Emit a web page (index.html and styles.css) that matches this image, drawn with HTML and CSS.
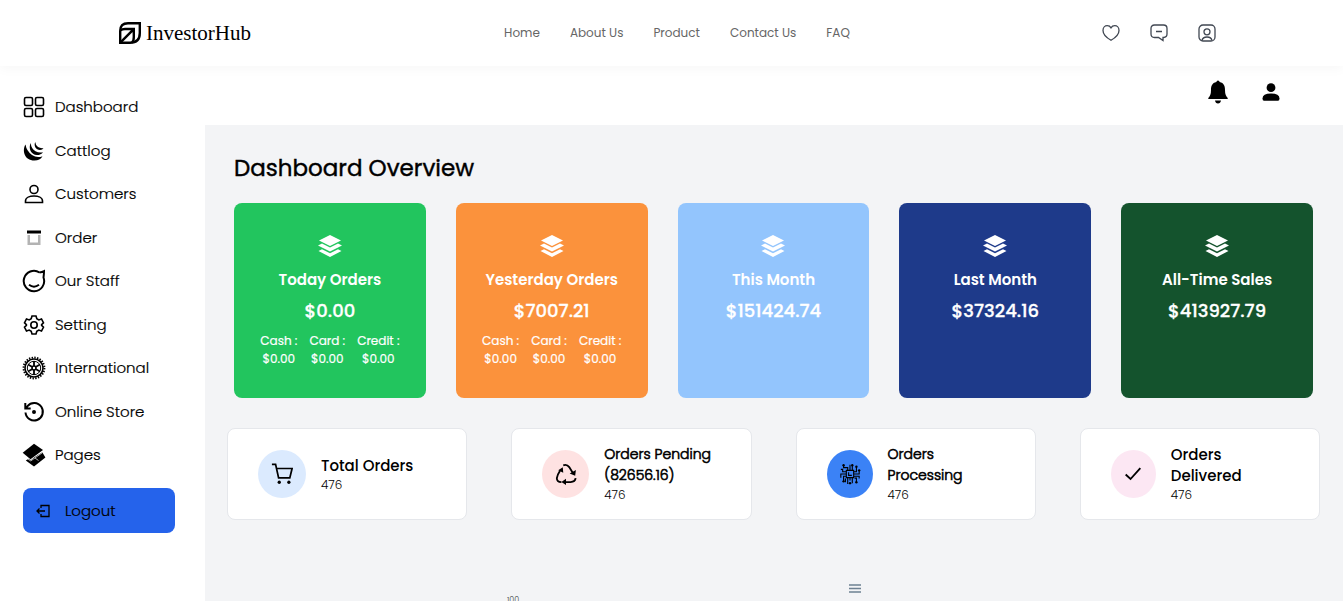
FILE: index.html
```html
<!DOCTYPE html>
<html lang="en">
<head>
<meta charset="utf-8">
<meta name="viewport" content="width=device-width, initial-scale=1">
<title>InvestorHub</title>
<link rel="stylesheet" href="styles.css">
</head>
<body>
<svg class="defs" aria-hidden="true">
  <symbol id="layers" viewBox="0 0 24 24"><path d="M12 1L23 6.500 12 12 1 6.500z"/><path d="M4 9.500L12 13.500 20 9.500 24 11.500 12 17.500 0 11.500z"/><path d="M4 15.300L12 19.200 20 15.300 23.500 17 12 23 .5 17z"/></symbol>
</svg>

<header class="site-header">
  <a class="brand" href="#">
    <svg width="22" height="22" viewBox="0 0 22 22" fill="none" stroke="#000" stroke-width="2.400"><path d="M1.200 20.800V9Q1.200 1.200 9 1.200H20.800V11Q20.800 20.800 11 20.800z"/><path d="M1.500 8.500Q3 7 6 7H14.800V15Q14.800 19 13 20.500M1.800 20.200L14.500 7.300"/></svg>
    <span>InvestorHub</span>
  </a>
  <nav class="site-nav">
    <a href="#">Home</a><a href="#">About Us</a><a href="#">Product</a><a href="#">Contact Us</a><a href="#">FAQ</a>
  </nav>
  <div class="site-actions">
    <button type="button" aria-label="Wishlist"><svg width="18" height="18" viewBox="0 0 18 18"><path d="M9 16.300C5 14 1 10.500 1 6.500C1 3.500 3 1.700 5.200 1.700C7 1.700 8.300 2.600 9 3.800C9.700 2.600 11 1.700 12.800 1.700C15 1.700 17 3.500 17 6.500C17 10.500 13 14 9 16.300z"/></svg></button>
    <button type="button" aria-label="Messages"><svg width="18" height="18" viewBox="0 0 18 18"><path d="M4.500 1H13.500Q17 1 17 4.500V10Q17 13.300 13.500 13.500H13V16.500L8.500 13.500H4.500Q1 13.500 1 10V4.500Q1 1 4.500 1zM6 7.500H12"/></svg></button>
    <button type="button" aria-label="Profile"><svg width="18" height="18" viewBox="0 0 18 18"><rect x="1" y="1" width="16" height="16" rx="4"/><circle cx="9" cy="7.800" r="3"/><path d="M4 16.500C4.500 14 6.500 13 9 13S13.500 14 14 16.500"/></svg></button>
  </div>
</header>

<div class="layout">
  <aside class="sidebar">
    <ul class="menu">
      <li><a href="#"><svg viewBox="0 0 24 24" class="line"><rect x="2.500" y="2.500" width="8" height="8" rx="1.500"/><rect x="13.500" y="2.500" width="8" height="8" rx="1.500"/><rect x="2.500" y="13.500" width="8" height="8" rx="1.500"/><rect x="13.500" y="13.500" width="8" height="8" rx="1.500"/></svg>Dashboard</a></li>
      <li><a href="#"><svg viewBox="0 0 24 24"><path d="M3.500 5.500C0 11 2 21.500 12.500 21.500Q18 21.500 20.500 17.200Q15 19.500 10 16Q4.500 12 3.500 5.500zM8.800 4C6 9 9 16 15 16Q19 16 21 13.200Q17 14.200 13.500 12.200Q9 9.500 8.800 4zM13.200 3C11.500 7 14 11 18 11Q20.500 11 21.500 9Q18.500 9.500 16 8Q13.500 6 13.200 3z"/></svg>Cattlog</a></li>
      <li><a href="#"><svg viewBox="0 0 24 24" class="line"><circle cx="12" cy="7.500" r="4"/><path d="M3.500 20.500V19C3.500 15.500 8 14 12 14S20.500 15.500 20.500 19V20.500z"/></svg>Customers</a></li>
      <li><a href="#"><svg viewBox="0 0 24 24"><path d="M5 4.500H19V7.500H5z"/><path fill="#b3b3b3" d="M5.500 9H8V16.500H16V9H18.500V19H5.500z"/></svg>Order</a></li>
      <li><a href="#"><svg viewBox="0 0 24 24" class="line bold"><path d="M17.500 3.500A10.200 10.200 0 1 0 21.500 8.500Q22 5 22 2.200Q20 3.200 17.500 3.500M7 15.800Q12 19.500 17 15.800"/></svg>Our Staff</a></li>
      <li><a href="#"><svg viewBox="0 0 24 24" class="line"><circle cx="12" cy="12" r="3.200"/><path d="M10 3H14L14.800 5.700L16.800 6.900L19.500 6L21.500 9.800L19.600 11.700V12.300L21.500 14.200L19.500 18L16.800 17.100L14.800 18.300L14 21H10L9.200 18.300L7.200 17.100L4.500 18L2.500 14.200L4.400 12.300V11.700L2.500 9.800L4.500 6L7.200 6.900L9.200 5.700z"/></svg>Setting</a></li>
      <li><a href="#"><svg viewBox="0 0 24 24" class="line"><circle cx="12" cy="12" r="10.400" stroke-width="2" stroke-dasharray="1.430 1.292"/><circle cx="12" cy="12" r="9"/><circle cx="12" cy="12" r="6.700" stroke-width="1"/><circle cx="12" cy="12" r="2"/><path stroke-width="1.800" d="M12 5V10M12 14V19M6 8.500L10 10.700M14 13.300L18 15.500M6 15.500L10 13.300M14 10.700L18 8.500"/></svg>International</a></li>
      <li><a href="#"><svg viewBox="0 0 24 24" class="line bold"><path d="M3.500 12.500A8.700 8.700 0 1 0 5.500 6.200L3.500 8.200M3.300 3V8.500H8.700"/><circle cx="12" cy="12" r="1" fill="#000"/></svg>Online Store</a></li>
      <li><a href="#"><svg viewBox="0 0 24 24"><path d="M12 .8L21 7 8.500 16.300 .7 9.700z"/><path d="M12.500 14.200L20.300 9.300 23.400 14.500 12 23.400 3.800 17.500 6.500 15.800 9 17.300z"/><path d="M5.500 16L8.800 17.900 20.500 9.600M13 15L16.500 17.500" fill="none" stroke="#fff" stroke-width=".7"/></svg>Pages</a></li>
    </ul>
    <button type="button" class="logout"><svg width="14" height="14" viewBox="0 0 14 14"><path d="M5 4V1.500H13V12.500H5V10M1 7H9M3.500 4.500L1 7L3.500 9.500"/></svg>Logout</button>
  </aside>

  <div class="workspace">
    <div class="topbar">
      <button type="button" aria-label="Notifications"><svg width="20" height="24" viewBox="0 0 20 24"><path d="M10 .5Q11.500 .5 11.600 2C16 3 17 6 17 10Q17 15.500 19.700 18V19H.3V18Q3 15.500 3 10C3 6 4 3 8.400 2Q8.500 .5 10 .5zM7 20.500H13Q12.500 23.500 10 23.500T7 20.500z"/></svg></button>
      <button type="button" aria-label="Account"><svg width="20" height="24" viewBox="0 0 20 24"><circle cx="10" cy="7.700" r="4.400"/><path d="M1.500 18.500Q1.500 13.500 10 13.500T18.500 18.500Q18.500 20.700 17 20.700H3Q1.500 20.700 1.500 18.500z"/></svg></button>
    </div>

    <main class="content">
      <h1>Dashboard Overview</h1>
      <section class="sales">
        <article class="sale green"><svg class="stack"><use href="#layers"/></svg><h2>Today Orders</h2><p class="amount">$0.00</p>
          <dl><div><dt>Cash :</dt><dd>$0.00</dd></div><div><dt>Card :</dt><dd>$0.00</dd></div><div><dt>Credit :</dt><dd>$0.00</dd></div></dl></article>
        <article class="sale orange"><svg class="stack"><use href="#layers"/></svg><h2>Yesterday Orders</h2><p class="amount">$7007.21</p>
          <dl><div><dt>Cash :</dt><dd>$0.00</dd></div><div><dt>Card :</dt><dd>$0.00</dd></div><div><dt>Credit :</dt><dd>$0.00</dd></div></dl></article>
        <article class="sale sky"><svg class="stack"><use href="#layers"/></svg><h2>This Month</h2><p class="amount">$151424.74</p></article>
        <article class="sale navy"><svg class="stack"><use href="#layers"/></svg><h2>Last Month</h2><p class="amount">$37324.16</p></article>
        <article class="sale forest"><svg class="stack"><use href="#layers"/></svg><h2>All-Time Sales</h2><p class="amount">$413927.79</p></article>
      </section>

      <section class="stats">
        <article class="stat">
          <span class="badge total"><svg viewBox="0 0 24 24" class="line"><path stroke-width="1.900" d="M1 1.500H5L8.300 16.200H20.500L23 6H6"/><circle cx="9" cy="21" r="1.800" fill="#000" stroke="none"/><circle cx="19.500" cy="21" r="1.800" fill="#000" stroke="none"/></svg></span>
          <div><h3>Total Orders</h3><p>476</p></div>
        </article>
        <article class="stat">
          <span class="badge pending"><svg viewBox="0 0 24 24"><path class="loop" d="M9 2.500Q13 1 15.500 4.500L19.500 11M22.500 16.500Q22 20.500 17 20.800H12M7 20.800Q2 20.500 2 16.500Q2.500 13 5.500 8.500"/><path d="M22.800 7.500L22 14 16 11.500zM12 17.300V24L7 20.800zM3.500 8L8.500 4.500 9 10.500z"/></svg></span>
          <div><h3 class="compact">Orders Pending (82656.16)</h3><p>476</p></div>
        </article>
        <article class="stat">
          <span class="badge processing"><svg viewBox="0 0 24 24" class="line"><path stroke-width="1.200" d="M8 8H16V16H8zM10.500 10V13.500H14M9.500 8V5H5V3M12 8V2M14.500 8V3M16 9.500H19V4M16 12H22V8M16 14.500H22V17M14.500 16V22M12 16V19M9.500 16V23M8 9.500H4V7H2M8 12H2V16M8 14.500H5V20M17 16.500H19V21M7 17V21"/><g fill="#000" stroke="none"><circle cx="5" cy="2.500" r="1.300"/><circle cx="14.500" cy="2.500" r="1.300"/><circle cx="19" cy="4" r="1.300"/><circle cx="22" cy="8" r="1.300"/><circle cx="5" cy="20" r="1.300"/><circle cx="19" cy="21" r="1.300"/><circle cx="12" cy="22" r="1.300"/></g></svg></span>
          <div><h3 class="compact">Orders<br>Processing</h3><p>476</p></div>
        </article>
        <article class="stat">
          <span class="badge delivered"><svg viewBox="0 0 24 24" class="line bold"><path d="M4 12.500L9.300 17.500L20 5.500"/></svg></span>
          <div><h3>Orders<br>Delivered</h3><p>476</p></div>
        </article>
      </section>

      <section class="chart">
        <button type="button" aria-label="Chart menu"><svg width="12" height="9" viewBox="0 0 12 9"><path d="M0 1H12M0 4.500H12M0 8H12" stroke="#6e8192" stroke-width="1.300"/></svg></button>
        <span class="tick">100</span>
      </section>
    </main>
  </div>
</div>
</body>
</html>
```

FILE: styles.css
```css
* { box-sizing: border-box; }
body, h1, h2, h3, p, ul, dl, dd { margin: 0; padding: 0; }
body {
  display: flex;
  flex-direction: column;
  height: 100vh;
  overflow: hidden;
  background: #fff;
  color: #000;
  font-family: Poppins, Inter, sans-serif;
  font-weight: 300;
}
a { color: inherit; text-decoration: none; }
button { padding: 0; border: 0; background: none; font: inherit; color: inherit; cursor: pointer; }
svg { display: block; flex: none; }
.defs { width: 0; height: 0; position: absolute; }
.line { fill: none; stroke: #000; stroke-width: 1.6; }
.line.bold { stroke-width: 2; }

.site-header {
  display: grid;
  grid-template-columns: 1fr auto 1fr;
  align-items: center;
  height: 66px;
  flex: none;
  padding: 0 108px 0 119px;
  box-shadow: 0 2px 12px rgba(0, 0, 0, 0.04);
}
.brand { display: flex; align-items: center; gap: 5px; font: 21px "Liberation Serif", serif; }
.site-nav { display: flex; gap: 30px; font-size: 12px; font-weight: 400; color: #666; }
.site-actions { display: flex; justify-content: flex-end; gap: 30px; padding-right: 19px; }
.site-actions svg { fill: none; stroke: #404752; stroke-width: 1.3; }

.layout { display: flex; flex: 1; min-height: 0; }
.sidebar { width: 205px; flex: none; padding: 29px 30px 0 22px; }
.menu { display: flex; flex-direction: column; justify-content: space-between; height: 372px; list-style: none; }
.menu a { display: flex; align-items: center; gap: 9px; font-size: 15px; line-height: 24px; }
.menu svg { width: 24px; height: 24px; }
.menu a, .logout { -webkit-text-stroke: 0.2px; }
.logout {
  display: flex;
  align-items: center;
  gap: 15px;
  width: 152px;
  height: 45px;
  margin: 21px 0 0 1px;
  padding-left: 13px;
  border-radius: 8px;
  background: #2563eb;
  font-size: 15px;
}
.logout svg { fill: none; stroke: #000; stroke-width: 1.3; }

.workspace { display: flex; flex: 1; flex-direction: column; min-width: 0; }
.topbar { display: flex; justify-content: flex-end; gap: 33px; height: 59px; flex: none; padding: 14px 62px 0 0; align-items: flex-start; }
.content { flex: 1; min-height: 0; padding: 28px 23px 0 22px; background: #f3f4f6; }
h1 { padding-left: 7px; font-size: 23px; font-weight: 400; line-height: 30px; -webkit-text-stroke: 0.4px; }

.sales { display: grid; grid-template-columns: repeat(5, 1fr); gap: 30px; margin-top: 20px; padding: 0 7px; }
.sale { display: flex; flex-direction: column; align-items: center; padding: 31px 0 30px; border-radius: 8px; color: #fff; }
.green { background: #22c55e; }
.orange { background: #fb923c; }
.sky { background: #93c5fd; }
.navy { background: #1e3a8a; }
.forest { background: #14532d; }
.stack { width: 24px; height: 24px; fill: #fff; }
.sale h2 { margin-top: 10px; font-size: 15px; font-weight: 600; line-height: 24px; }
.amount { margin-top: 5px; font-size: 18px; font-weight: 500; line-height: 28px; -webkit-text-stroke: 0.3px; }
.sale dl { display: flex; gap: 12px; margin-top: 7px; font-size: 12px; font-weight: 400; line-height: 18px; text-align: center; -webkit-text-stroke: 0.2px; }

.stats { display: grid; grid-template-columns: repeat(4, 1fr); gap: 44px; margin-top: 30px; }
.stat { display: flex; align-items: center; gap: 15px; min-height: 92px; padding: 0 30px; border: 1px solid #e5e7eb; border-radius: 8px; background: #fff; }
.badge { display: flex; flex: none; align-items: center; justify-content: center; width: 46px; height: 48px; border-radius: 50%; }
.badge svg { width: 22px; height: 22px; }
.total { width: 48px; background: #dbeafe; }
.pending { width: 47px; background: #fee2e2; }
.processing { background: #3b82f6; }
.delivered { width: 45px; background: #fce7f3; }
.loop { fill: none; stroke: #000; stroke-width: 2; }
.stat h3 { font-size: 15px; font-weight: 500; line-height: 21px; }
.stat h3.compact { font-size: 14px; font-weight: 300; -webkit-text-stroke: 0.6px; }
.stat p { font-size: 12px; line-height: 18px; }

.chart { display: flex; flex-direction: column; width: 354px; margin: 64px 0 0 280px; }
.chart button { align-self: flex-end; }
.tick { margin-top: 3px; font-size: 8px; line-height: 10px; color: #373d3f; }
```
